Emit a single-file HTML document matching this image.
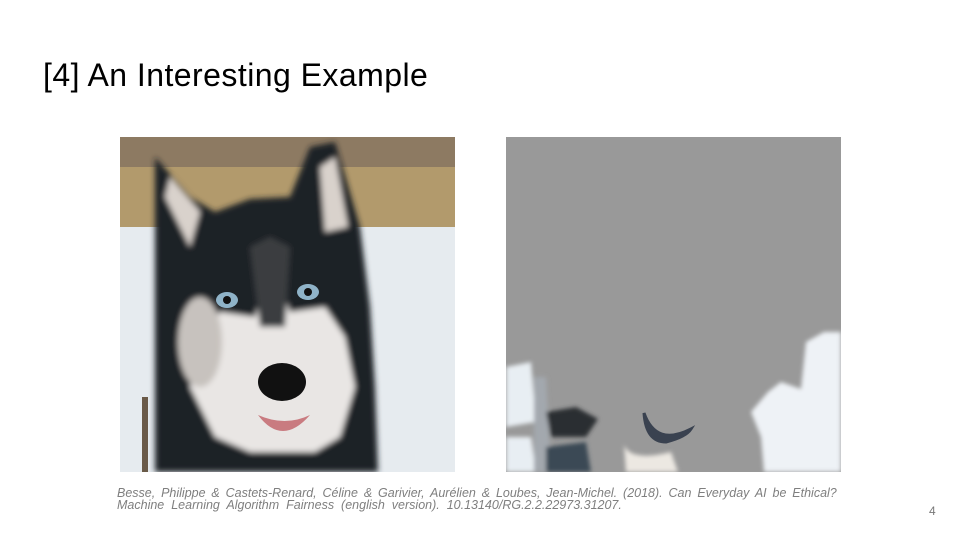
<!DOCTYPE html>
<html><head><meta charset="utf-8"><style>
html,body{margin:0;padding:0;background:#fff;width:960px;height:540px;overflow:hidden;position:relative;font-family:"Liberation Sans",sans-serif}
.t{position:absolute;left:43px;top:57px;font-size:32px;color:#000;letter-spacing:0.45px}
.c{position:absolute;left:117px;font-size:12.5px;line-height:12px;color:#7f7f7f;font-style:italic;white-space:nowrap}
.n{position:absolute;left:929px;top:504px;font-size:12px;color:#777}
svg{position:absolute}
</style></head><body>
<div class="t">[4] An Interesting Example</div>
<svg style="left:120px;top:137px" width="335" height="335" viewBox="0 0 335 335">
<defs><filter id="b"><feGaussianBlur stdDeviation="3"/></filter></defs>
<rect width="335" height="335" fill="#e6ebef"/>
<rect width="335" height="90" fill="#b29a6c"/>
<rect y="0" width="335" height="30" fill="#8d7a62"/>
<g filter="url(#b)">
<path d="M35 335 L35 220 L35 110 L35 20 L70 60 L95 75 L130 62 L170 60 L190 10 L215 5 L240 90 L250 170 L255 250 L258 335 Z" fill="#1f2126"/>
<path d="M45 60 L50 40 L80 75 L70 110Z" fill="#d9d2cc"/>
<path d="M200 30 L215 20 L228 90 L205 95Z" fill="#d9d2cc"/>
<path d="M70 250 L80 200 L100 175 L135 180 L150 120 L170 175 L205 170 L225 200 L235 250 L220 300 L195 315 L130 315 L95 300Z" fill="#e9e6e4"/>
<path d="M130 110 L150 100 L170 110 L165 190 L140 190Z" fill="#3a3c40"/>
<ellipse cx="80" cy="205" rx="22" ry="45" fill="#c7c2be"/>
</g>
<ellipse cx="107" cy="163" rx="11" ry="8" fill="#8fb3c8"/><circle cx="107" cy="163" r="4" fill="#111"/>
<ellipse cx="188" cy="155" rx="11" ry="8" fill="#8fb3c8"/><circle cx="188" cy="155" r="4" fill="#111"/>
<ellipse cx="162" cy="245" rx="24" ry="19" fill="#111"/>
<path d="M138 278 Q162 310 190 278 Q165 290 138 278Z" fill="#c97b80"/>
<rect x="22" y="260" width="6" height="75" fill="#6a5a48"/>
</svg>
<svg style="left:506px;top:137px" width="335" height="335" viewBox="0 0 335 335">
<defs><filter id="b2"><feGaussianBlur stdDeviation="2"/></filter></defs>
<rect width="335" height="335" fill="#999"/>
<g filter="url(#b2)">
<path d="M0 230 L25 225 L30 285 L0 290Z" fill="#e8eef3"/>
<path d="M0 300 L25 300 L30 335 L0 335Z" fill="#e8eef3"/>
<path d="M28 240 L40 240 L45 335 L28 335Z" fill="#a3a8ae"/>
<path d="M40 275 L70 270 L92 282 L80 300 L45 300Z" fill="#2b2d30"/>
<path d="M40 310 L80 305 L85 335 L40 335Z" fill="#3a4a55"/>
<path d="M245 275 L262 255 L275 245 L295 252 L300 205 L318 195 L335 195 L335 335 L258 335 L255 300Z" fill="#eef2f6"/>
<path d="M118 308 Q125 325 165 315 L172 335 L120 335Z" fill="#ece8e2"/>
</g>
<path d="M138 276 Q150 310 185 292 Q180 300 160 305 Q140 305 138 276Z" fill="#3a4250" stroke="#3a4250" stroke-width="3"/>
</svg>
<div class="c" style="top:487px;word-spacing:2.4px">Besse, Philippe &amp; Castets-Renard, Céline &amp; Garivier, Aurélien &amp; Loubes, Jean-Michel. (2018). Can Everyday AI be Ethical?</div>
<div class="c" style="top:499px;word-spacing:3.5px">Machine Learning Algorithm Fairness (english version). 10.13140/RG.2.2.22973.31207.</div>
<div class="n">4</div>
</body></html>
